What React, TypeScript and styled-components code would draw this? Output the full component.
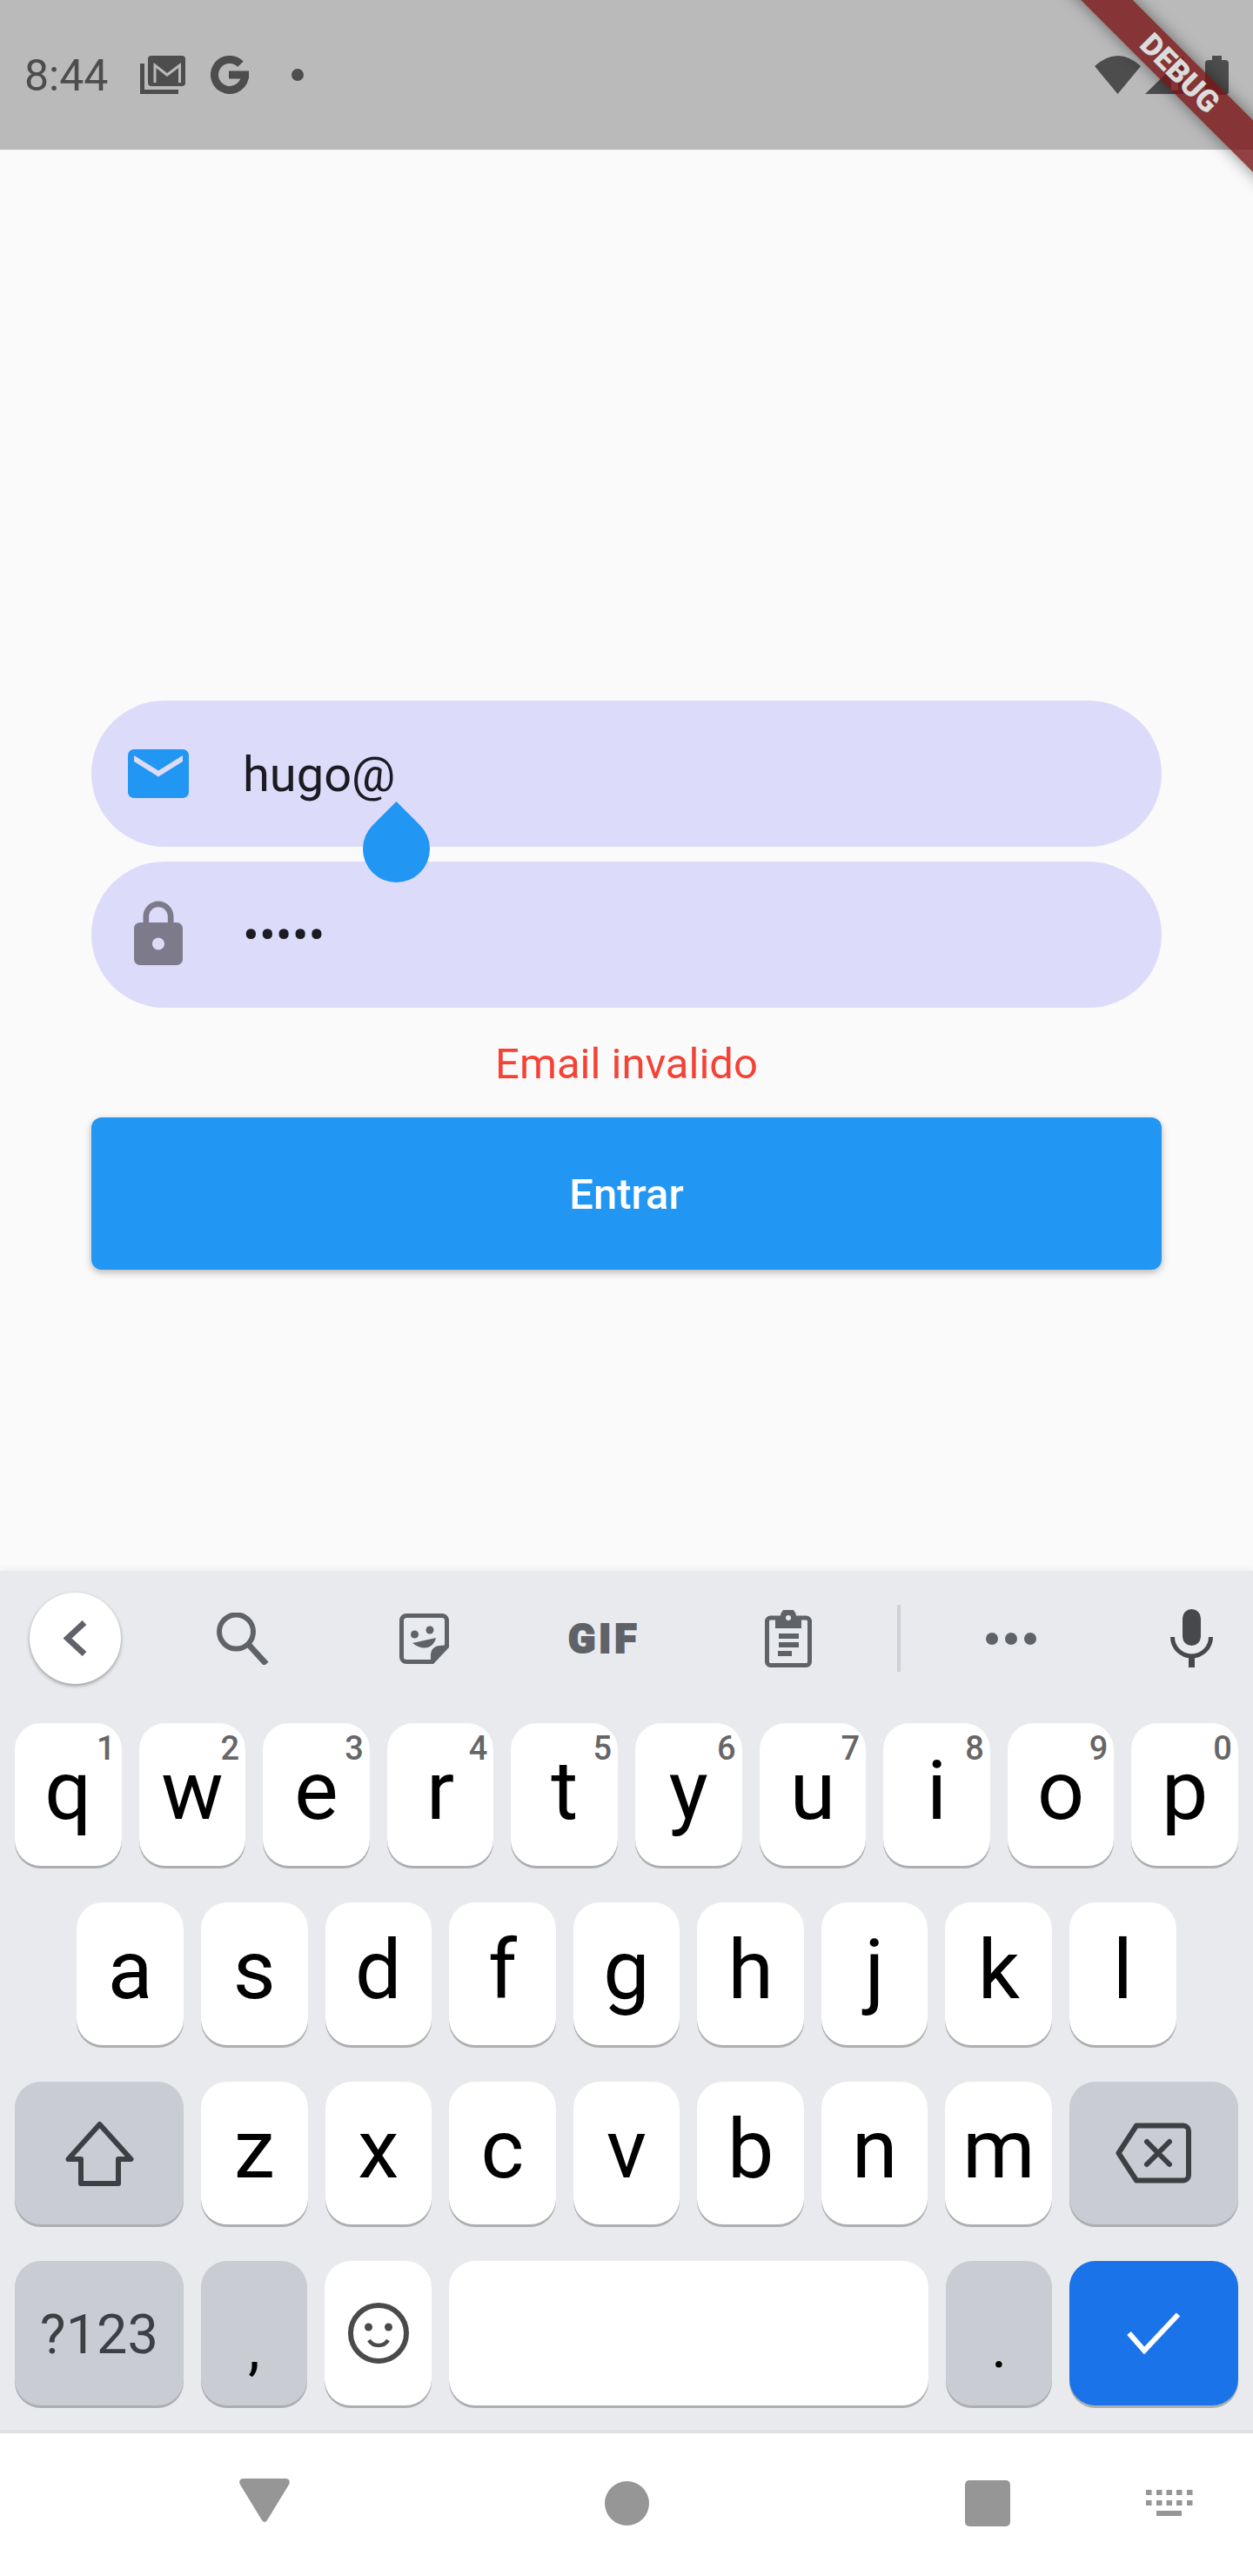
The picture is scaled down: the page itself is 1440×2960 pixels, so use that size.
import React from 'react';
import styled, { createGlobalStyle } from 'styled-components';

const Global = createGlobalStyle`
  html, body { margin: 0; padding: 0; background: #fafafa; }
  * { box-sizing: border-box; }
  body { font-family: Roboto, "Liberation Sans", sans-serif; }
`;

const Page = styled.div`
  position: relative;
  width: 1440px;
  height: 2960px;
  display: flex;
  flex-direction: column;
  overflow: hidden;
  background: #fafafa;
`;

const StatusBar = styled.header`
  flex: none;
  height: 172px;
  display: flex;
  align-items: center;
  justify-content: space-between;
  padding: 0 28px 0 28px;
  background: #bababa;
  color: #4d4d4d;
`;

const StatusGroup = styled.div`
  display: flex;
  align-items: center;
`;

const Clock = styled.span`
  font-size: 50px;
  line-height: 1;
  font-weight: 400;
  margin-right: 37px;
  padding-top: 2px;
`;

const StatusIcon = styled.svg<{ $before?: number }>`
  display: block;
  flex: none;
  margin-left: ${(p) => p.$before ?? 0}px;
`;

const Banner = styled.div`
  position: absolute;
  left: 1156px;
  top: 63px;
  width: 400px;
  height: 42px;
  transform: rotate(45deg);
  display: flex;
  align-items: center;
  justify-content: center;
  background: rgba(120, 20, 20, 0.8);
  box-shadow: 0 0 18px rgba(0, 0, 0, 0.45);
  color: #dcdcdc;
  font-size: 35px;
  font-weight: 900;
  line-height: 1;
`;

const Main = styled.main`
  flex: none;
  height: 1633px;
  padding: 633px 105px 0;
  display: flex;
  flex-direction: column;
`;

const Fields = styled.div`
  display: flex;
  flex-direction: column;
  gap: 17px;
`;

const Field = styled.div<{ $focused?: boolean }>`
  position: ${(p) => (p.$focused ? 'relative' : 'static')};
  height: 168px;
  border-radius: 84px;
  padding-left: 35px;
  display: flex;
  align-items: center;
  gap: 55px;
  background: #dddbfa;
`;

const FieldIcon = styled.svg`
  display: block;
  flex: none;
`;

const FieldText = styled.span`
  font-size: 56px;
  line-height: 1;
  padding-top: 1px;
  color: #1c1b22;
`;

const DropHandle = styled.div`
  position: absolute;
  left: 311.5px;
  top: 131.5px;
  width: 77px;
  height: 77px;
  border-radius: 0 50% 50% 50%;
  transform: rotate(45deg);
  background: #2196f3;
`;

const ErrorText = styled.div`
  height: 126px;
  padding-top: 2px;
  display: flex;
  align-items: center;
  justify-content: center;
  font-size: 49px;
  color: #f44336;
`;

const SubmitButton = styled.button`
  height: 175px;
  border: 0;
  padding: 2px 0 0;
  border-radius: 12px;
  background: #2196f3;
  color: #fff;
  font-family: inherit;
  font-size: 49px;
  font-weight: 500;
  box-shadow: 0 3px 9px rgba(0, 0, 0, 0.28);
`;

const Keyboard = styled.section`
  flex: none;
  height: 991px;
  background: #e8eaed;
  border-bottom: 4px solid #e0e0e0;
  box-shadow: 0 -2px 8px rgba(0, 0, 0, 0.05);
`;

const Toolbar = styled.div`
  height: 175px;
  padding: 0 0 20px 34px;
  display: flex;
  align-items: center;
`;

const BackButton = styled.div`
  flex: none;
  width: 105px;
  height: 105px;
  border-radius: 50%;
  background: #fff;
  box-shadow: 0 2px 4px rgba(0, 0, 0, 0.35);
  display: flex;
  align-items: center;
  justify-content: center;
`;

const ToolIcon = styled.svg<{ $before: number }>`
  display: block;
  flex: none;
  margin-left: ${(p) => p.$before}px;
`;

const GifLabel = styled.span`
  flex: none;
  width: 81px;
  margin-left: 137px;
  text-align: center;
  font-size: 46px;
  font-weight: 900;
  line-height: 1;
  letter-spacing: 4px;
  -webkit-text-stroke: 2px #5f6368;
  color: #5f6368;
`;

const ToolDivider = styled.div`
  flex: none;
  width: 4px;
  height: 77px;
  margin-left: 98px;
  background: #cfd1d6;
`;

const KeyRows = styled.div`
  padding: 0 17px;
  display: flex;
  flex-direction: column;
  gap: 42px;
`;

const KeyRow = styled.div`
  height: 164px;
  display: flex;
  justify-content: center;
  gap: 20px;
  &:last-child { height: 166px; }
`;

const tones = {
  light: '#ffffff',
  dark: '#caccd4',
  blue: '#1a73e8',
};

const Key = styled.div<{ $w: number; $tone?: keyof typeof tones; $size?: number; $line?: number }>`
  position: relative;
  flex: none;
  width: ${(p) => p.$w}px;
  height: 100%;
  border-radius: 30px;
  background: ${(p) => tones[p.$tone ?? 'light']};
  box-shadow: 0 3px 0 #acaeb1;
  display: flex;
  align-items: ${(p) => (p.$line ? 'flex-start' : 'center')};
  justify-content: center;
  font-size: ${(p) => p.$size ?? 95}px;
  line-height: ${(p) => p.$line ?? 156}px;
  color: #000;
`;

const Hint = styled.span`
  position: absolute;
  top: 10px;
  right: 7px;
  font-size: 38px;
  line-height: 38px;
  font-weight: 500;
  color: #666;
`;

const ModeLabel = styled.span`
  font-size: 63px;
  line-height: 1;
  padding-top: 3px;
  color: #3c4043;
`;

const NavBar = styled.nav`
  flex: 1;
  padding: 0 0 4px 275px;
  display: flex;
  align-items: center;
  background: #fff;
`;

const NavIcon = styled.svg<{ $before?: number; $lift?: number }>`
  display: block;
  flex: none;
  margin-left: ${(p) => p.$before ?? 0}px;
  margin-bottom: ${(p) => p.$lift ?? 0}px;
`;

const rows: { k: string; h?: string }[][] = [
  [
    { k: 'q', h: '1' }, { k: 'w', h: '2' }, { k: 'e', h: '3' }, { k: 'r', h: '4' }, { k: 't', h: '5' },
    { k: 'y', h: '6' }, { k: 'u', h: '7' }, { k: 'i', h: '8' }, { k: 'o', h: '9' }, { k: 'p', h: '0' },
  ],
  ['a', 's', 'd', 'f', 'g', 'h', 'j', 'k', 'l'].map((k) => ({ k })),
];
const W = 122.6;
const BIG = 193.5;

export default function App() {
  return (
    <Page>
      <Global />
      <StatusBar>
        <StatusGroup>
          <Clock>8:44</Clock>
          <StatusIcon width="52" height="44" viewBox="0 0 52 44">
            <path d="M2.5 9V41.5H44" fill="none" stroke="#4d4d4d" strokeWidth="5" />
            <rect x="9" y="0" width="43" height="35" rx="4" fill="#4d4d4d" />
            <path d="M17 31V11L31 22L45.5 11V31" fill="none" stroke="#bababa" strokeWidth="3" />
          </StatusIcon>
          <StatusIcon $before={29} width="44" height="44" viewBox="0 0 44 44">
            <path d="M34.5 9.7A17.5 17.5 0 1 0 39.5 22" fill="none" stroke="#4d4d4d" strokeWidth="9" />
            <rect x="21" y="17.5" width="23" height="9" fill="#4d4d4d" />
          </StatusIcon>
          <StatusIcon $before={49} width="14" height="14" viewBox="0 0 14 14">
            <circle cx="7" cy="7" r="7" fill="#4d4d4d" />
          </StatusIcon>
        </StatusGroup>
        <StatusGroup>
          <StatusIcon width="53" height="44" viewBox="0 0 53 44">
            <path d="M26.5 44L0 12Q26.5 -12 53 12Z" fill="#4d4d4d" />
          </StatusIcon>
          <StatusIcon $before={5} width="44" height="43" viewBox="0 0 44 43">
            <path fillRule="evenodd" d="M44 0V43H0ZM30 20V39H38V20Z" fill="#4d4d4d" />
          </StatusIcon>
          <StatusIcon $before={25} width="27" height="45" viewBox="0 0 27 45">
            <path d="M8 0H19V5H23A4 4 0 0 1 27 9V41A4 4 0 0 1 23 45H4A4 4 0 0 1 0 41V9A4 4 0 0 1 4 5H8Z" fill="#4d4d4d" />
          </StatusIcon>
        </StatusGroup>
      </StatusBar>
      <Banner>DEBUG</Banner>

      <Main>
        <Fields>
          <Field $focused>
            <FieldIcon width="84" height="84" viewBox="0 0 24 24">
              <path fill="#2196f3" d="M20 4H4c-1.1 0-1.99.9-1.99 2L2 18c0 1.1.9 2 2 2h16c1.1 0 2-.9 2-2V6c0-1.1-.9-2-2-2zm0 4l-8 5-8-5V6l8 5 8-5v2z" />
            </FieldIcon>
            <FieldText>hugo@</FieldText>
            <DropHandle />
          </Field>
          <Field>
            <FieldIcon width="84" height="84" viewBox="0 0 24 24">
              <path fill="#7c7a8b" d="M18 8h-1V6c0-2.76-2.24-5-5-5S7 3.24 7 6v2H6c-1.1 0-2 .9-2 2v10c0 1.1.9 2 2 2h12c1.1 0 2-.9 2-2V10c0-1.1-.9-2-2-2zm-6 9c-1.1 0-2-.9-2-2s.9-2 2-2 2 .9 2 2-.9 2-2 2zm3.1-9H8.9V6c0-1.71 1.39-3.1 3.1-3.1 1.71 0 3.1 1.39 3.1 3.1v2z" />
            </FieldIcon>
            <FieldText>•••••</FieldText>
          </Field>
        </Fields>
        <ErrorText>Email invalido</ErrorText>
        <SubmitButton>Entrar</SubmitButton>
      </Main>

      <Keyboard>
        <Toolbar>
          <BackButton>
            <svg width="27" height="41" viewBox="0 0 27 41">
              <path d="M24 2.5L4.500 20.500L24 38.500" fill="none" stroke="#5f6368" strokeWidth="7" />
            </svg>
          </BackButton>
          <ToolIcon $before={110} width="60" height="60" viewBox="0 0 60 60">
            <circle cx="22.5" cy="22" r="19.5" fill="none" stroke="#5f6368" strokeWidth="6" />
            <path d="M36 36L57 59" stroke="#5f6368" strokeWidth="7" />
          </ToolIcon>
          <ToolIcon $before={150} width="57" height="58" viewBox="0 0 57 58">
            <path d="M8 2.5H49A5.5 5.5 0 0 1 54.5 8V38L38 55.5H8A5.5 5.5 0 0 1 2.5 50V8A5.5 5.5 0 0 1 8 2.5Z" fill="none" stroke="#5f6368" strokeWidth="5" />
            <path d="M55 36V39L39 57H36V47A10 10 0 0 1 46 37Z" fill="#5f6368" />
            <circle cx="17.5" cy="24" r="4.5" fill="#5f6368" />
            <circle cx="35" cy="19" r="4.5" fill="#5f6368" />
            <path d="M15 34L42 28C40 38 29 45 15 34Z" fill="#5f6368" />
          </ToolIcon>
          <GifLabel>GIF</GifLabel>
          <ToolIcon $before={145} width="54" height="66" viewBox="0 0 54 66">
            <rect x="2.5" y="9" width="49" height="54.5" rx="4" fill="none" stroke="#5f6368" strokeWidth="5" />
            <path d="M12 7H18A9 9 0 0 1 36 7H42V21H12Z" fill="#5f6368" />
            <circle cx="27" cy="9" r="3" fill="#e8eaed" />
            <rect x="16" y="27" width="23" height="6" fill="#5f6368" />
            <rect x="16" y="37" width="23" height="6" fill="#5f6368" />
            <rect x="15" y="47" width="16" height="6" fill="#5f6368" />
          </ToolIcon>
          <ToolDivider />
          <ToolIcon $before={98} width="58" height="14" viewBox="0 0 58 14">
            <circle cx="7" cy="7" r="7" fill="#5f6368" />
            <circle cx="29" cy="7" r="7" fill="#5f6368" />
            <circle cx="51" cy="7" r="7" fill="#5f6368" />
          </ToolIcon>
          <ToolIcon $before={154} width="49" height="67" viewBox="0 0 49 67">
            <rect x="14" y="0" width="21" height="42" rx="10.5" fill="#46484c" />
            <path d="M2.5 32A22 22 0 0 0 46.5 32" fill="none" stroke="#46484c" strokeWidth="5" />
            <rect x="21" y="52" width="7" height="15" fill="#46484c" />
          </ToolIcon>
        </Toolbar>

        <KeyRows>
          {rows.map((row, i) => (
            <KeyRow key={i}>
              {row.map(({ k, h }) => (
                <Key key={k} $w={W} $line={156}>
                  {k}
                  {h && <Hint>{h}</Hint>}
                </Key>
              ))}
            </KeyRow>
          ))}
          <KeyRow>
            <Key $w={BIG} $tone="dark">
              <svg width="79" height="75" viewBox="0 0 79 75">
                <path d="M39.5 4L75.5 44H61V72H18V44H3.5Z" fill="none" stroke="#3c4043" strokeWidth="6" strokeLinejoin="round" />
              </svg>
            </Key>
            {['z', 'x', 'c', 'v', 'b', 'n', 'm'].map((k) => (
              <Key key={k} $w={W} $line={156}>{k}</Key>
            ))}
            <Key $w={BIG} $tone="dark">
              <svg width="87" height="70" viewBox="0 0 87 70">
                <path d="M24 3.5H78A6 6 0 0 1 84 9.5V60.5A6 6 0 0 1 78 66.5H24L3.5 35Z" fill="none" stroke="#3c4043" strokeWidth="6" strokeLinejoin="round" />
                <path d="M36 22L62 48M62 22L36 48" fill="none" stroke="#3c4043" strokeWidth="6" strokeLinecap="round" />
              </svg>
            </Key>
          </KeyRow>
          <KeyRow>
            <Key $w={BIG} $tone="dark"><ModeLabel>?123</ModeLabel></Key>
            <Key $w={W} $tone="dark" $size={68} $line={200}>,</Key>
            <Key $w={W}>
              <svg width="70" height="70" viewBox="0 0 70 70">
                <circle cx="35" cy="35" r="32" fill="none" stroke="#4a4a4a" strokeWidth="6" />
                <circle cx="23.5" cy="28" r="4.5" fill="#4a4a4a" />
                <circle cx="46.5" cy="28" r="4.5" fill="#4a4a4a" />
                <path d="M24 43C29 51 41 51 46 43" fill="none" stroke="#4a4a4a" strokeWidth="4.5" />
              </svg>
            </Key>
            <Key $w={551} />
            <Key $w={W} $tone="dark" $size={68} $line={198}>.</Key>
            <Key $w={BIG} $tone="blue">
              <svg width="62" height="48" viewBox="0 0 62 48">
                <path d="M2.5 24L20 44L59 2.5" fill="none" stroke="#fff" strokeWidth="6" />
              </svg>
            </Key>
          </KeyRow>
        </KeyRows>
      </Keyboard>

      <NavBar>
        <NavIcon $lift={7} width="58" height="50" viewBox="0 0 58 50">
          <path d="M5 0H53C57 0 59 3 57 7L32 48C30 50.500 28 50.500 26 48L1 7C-1 3 1 0 5 0Z" fill="#969696" />
        </NavIcon>
        <NavIcon $before={362} width="51" height="51" viewBox="0 0 51 51">
          <circle cx="25.5" cy="25.5" r="25.5" fill="#969696" />
        </NavIcon>
        <NavIcon $before={363} width="52" height="53" viewBox="0 0 52 53">
          <rect width="52" height="53" rx="5" fill="#969696" />
        </NavIcon>
        <NavIcon $before={156} width="54" height="30" viewBox="0 0 54 30">
          {[0, 12].map((y) =>
            [0, 12, 23.5, 35, 47].map((x) => <rect key={`${x}-${y}`} x={x} y={y} width="6.5" height="6" fill="#969696" />),
          )}
          <rect x="12" y="24" width="29" height="6" fill="#969696" />
        </NavIcon>
      </NavBar>
    </Page>
  );
}
